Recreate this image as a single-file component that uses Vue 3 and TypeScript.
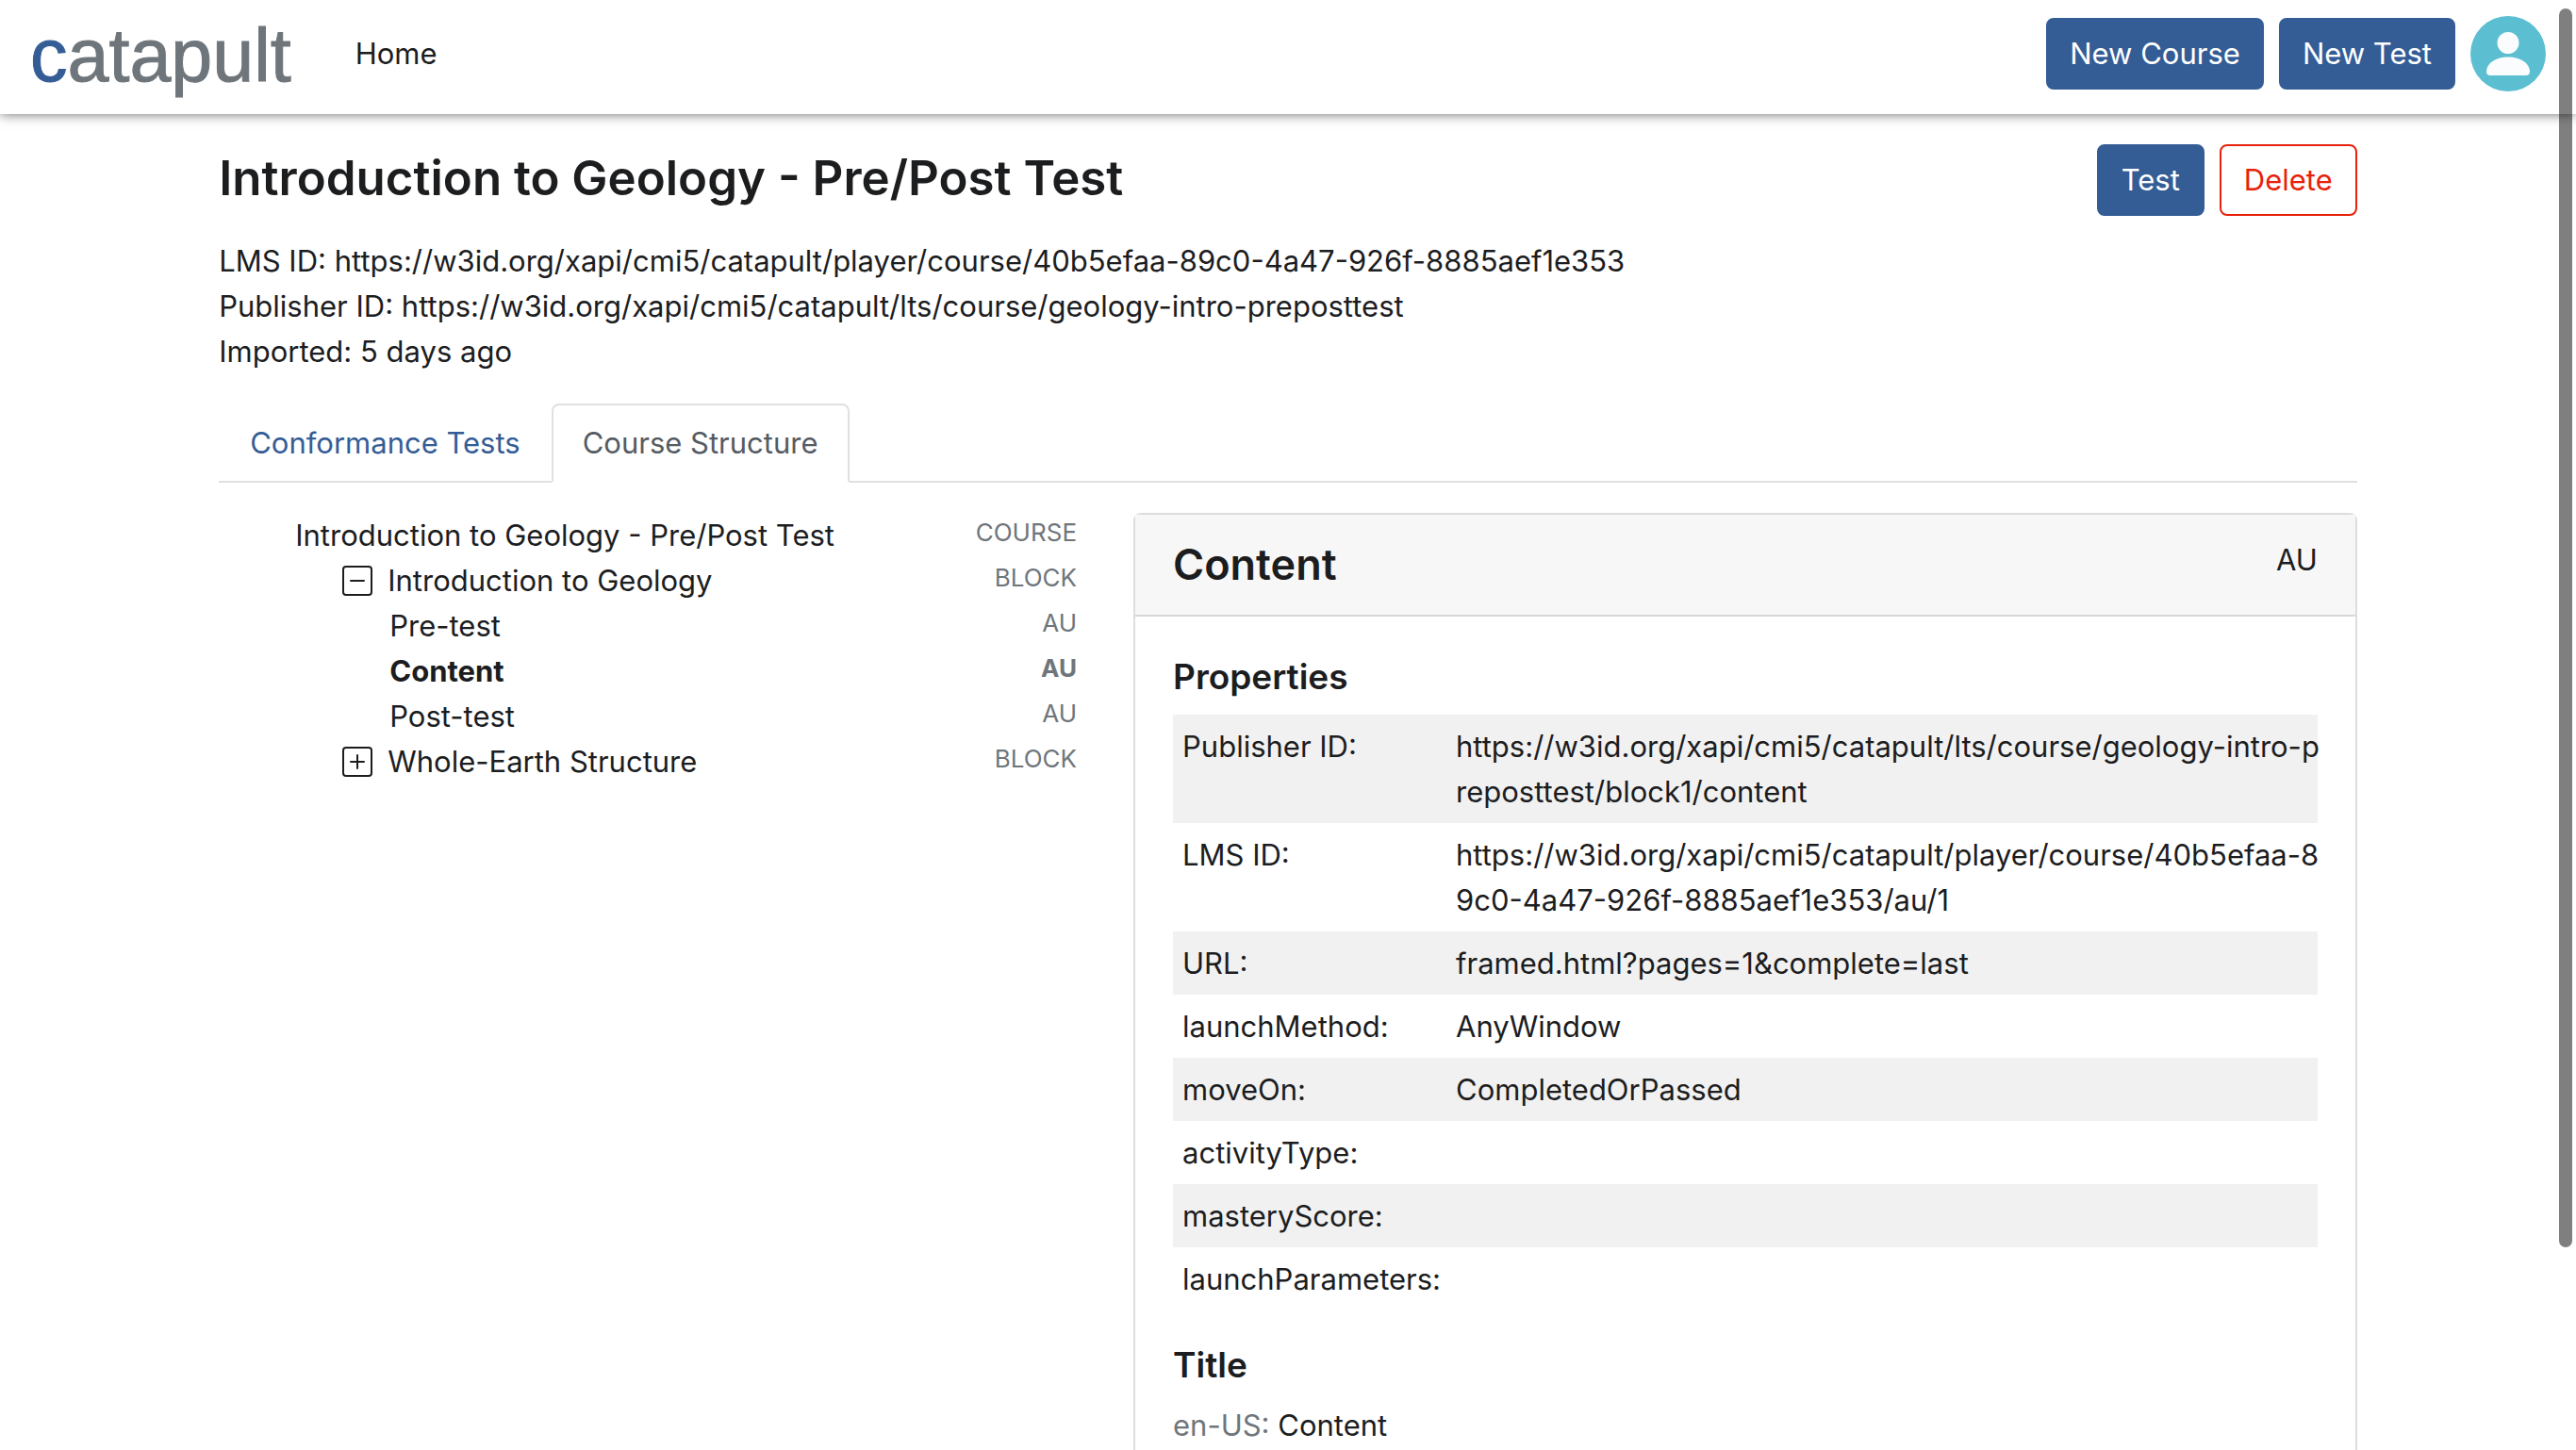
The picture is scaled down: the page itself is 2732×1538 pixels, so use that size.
<script setup lang="ts">
import { ref } from 'vue'

interface TreeNode {
  label: string
  kind: string
  level: number
  toggle?: 'open' | 'closed'
}

interface Property {
  name: string
  value: string
}

const nodes: TreeNode[] = [
  { label: 'Introduction to Geology - Pre/Post Test', kind: 'COURSE', level: 0 },
  { label: 'Introduction to Geology', kind: 'BLOCK', level: 1, toggle: 'open' },
  { label: 'Pre-test', kind: 'AU', level: 2 },
  { label: 'Content', kind: 'AU', level: 2 },
  { label: 'Post-test', kind: 'AU', level: 2 },
  { label: 'Whole-Earth Structure', kind: 'BLOCK', level: 1, toggle: 'closed' },
]

const properties: Property[] = [
  { name: 'Publisher ID', value: 'https://w3id.org/xapi/cmi5/catapult/lts/course/geology-intro-p\nreposttest/block1/content' },
  { name: 'LMS ID', value: 'https://w3id.org/xapi/cmi5/catapult/player/course/40b5efaa-8\n9c0-4a47-926f-8885aef1e353/au/1' },
  { name: 'URL', value: 'framed.html?pages=1&complete=last' },
  { name: 'launchMethod', value: 'AnyWindow' },
  { name: 'moveOn', value: 'CompletedOrPassed' },
  { name: 'activityType', value: '' },
  { name: 'masteryScore', value: '' },
  { name: 'launchParameters', value: '' },
]

const selected = ref('Content')
</script>

<template>
  <div class="app">
    <header class="navbar">
      <a href="#" class="brand"><span class="brand-initial">c</span>atapult</a>
      <nav class="nav-main"><a href="#">Home</a></nav>
      <div class="actions">
        <button type="button" class="btn btn-primary">New Course</button>
        <button type="button" class="btn btn-primary">New Test</button>
        <button type="button" class="avatar" aria-label="Account">
          <svg viewBox="0 0 80 80" aria-hidden="true">
            <circle cx="40" cy="40" r="40" fill="#5bbfd1" />
            <circle cx="40" cy="28.5" r="11.5" fill="#fbfcfe" />
            <path d="M21 63c-2.500 0-4-1.500-4-4 0-8 9-15.500 23-15.500S63 51 63 59c0 2.500-1.500 4-4 4z" fill="#fbfcfe" />
          </svg>
        </button>
      </div>
    </header>

    <main class="page">
      <div class="heading">
        <h1>Introduction to Geology - Pre/Post Test</h1>
        <div class="actions">
          <button type="button" class="btn btn-primary">Test</button>
          <button type="button" class="btn btn-danger">Delete</button>
        </div>
      </div>
      <div class="meta">
        <div>LMS ID: https://w3id.org/xapi/cmi5/catapult/player/course/40b5efaa-89c0-4a47-926f-8885aef1e353</div>
        <div>Publisher ID: https://w3id.org/xapi/cmi5/catapult/lts/course/geology-intro-preposttest</div>
        <div>Imported: 5 days ago</div>
      </div>

      <nav class="tabs">
        <a href="#" class="tab">Conformance Tests</a>
        <a href="#" class="tab active" aria-current="page">Course Structure</a>
      </nav>

      <div class="columns">
        <ul class="tree">
          <li
            v-for="node in nodes"
            :key="node.label"
            :class="['level-' + node.level, { selected: node.label === selected }]"
            @click="selected = node.label"
          >
            <button v-if="node.toggle" type="button" class="toggle" :aria-label="node.toggle === 'open' ? 'Collapse' : 'Expand'">
              <svg viewBox="0 0 16 16" fill="none" stroke="currentColor" aria-hidden="true">
                <rect x="0.5" y="0.5" width="15" height="15" rx="1.5" />
                <path d="M4.500 8h7" stroke-linecap="round" />
                <path v-if="node.toggle === 'closed'" d="M8 4.500v7" stroke-linecap="round" />
              </svg>
            </button>
            <span class="label">{{ node.label }}</span>
            <span class="kind">{{ node.kind }}</span>
          </li>
        </ul>

        <section class="card">
          <div class="card-header">
            <h2>Content</h2>
            <span>AU</span>
          </div>
          <div class="card-body">
            <h3>Properties</h3>
            <table>
              <tbody>
                <tr v-for="item in properties" :key="item.name">
                  <th scope="row">{{ item.name }}:</th>
                  <td>{{ item.value }}</td>
                </tr>
              </tbody>
            </table>
            <h3>Title</h3>
            <p><span class="lang">en-US:</span> Content</p>
          </div>
        </section>
      </div>
    </main>

    <div class="scroll-thumb" aria-hidden="true"></div>
  </div>
</template>

<style>
body {
  margin: 0;
  background: #fff;
}
</style>

<style scoped>
.app {
  position: relative;
  height: 100vh;
  overflow: hidden;
  color: #1c1d1f;
  font-family: Inter, "Liberation Sans", sans-serif;
  font-size: 31px;
  line-height: 48px;
}

a {
  color: inherit;
  text-decoration: none;
}

h1,
h2,
h3,
p,
ul {
  margin: 0;
  padding: 0;
  font-weight: 600;
}

.navbar {
  display: flex;
  align-items: center;
  height: 121px;
  padding: 0 32px 7px;
  box-sizing: border-box;
  box-shadow: 0 0 12px rgba(0, 0, 0, 0.6);
}

.brand {
  padding-top: 4px;
  color: #6f767b;
  font-family: "Liberation Sans", Arial, sans-serif;
  font-size: 79px;
  line-height: 96px;
  -webkit-text-stroke: 1px currentColor;
}

.brand-initial {
  color: #345d96;
}

.nav-main {
  flex: 1;
  padding-left: 68px;
}

.actions {
  display: flex;
  align-items: center;
  gap: 16px;
}

.btn {
  height: 76px;
  padding: 0 23px;
  border: 2px solid #345d96;
  border-radius: 8px;
  font: inherit;
}

.heading .btn {
  padding: 0 24px;
}

.btn-primary {
  background: #345d96;
  color: #fff;
}

.btn-danger {
  border-color: #e7210b;
  background: #fff;
  color: #e7210b;
}

.avatar {
  width: 80px;
  height: 80px;
  padding: 0;
  border: 0;
  background: none;
}

.avatar svg,
.toggle svg {
  display: block;
  width: 100%;
  height: 100%;
}

.page {
  width: 83%;
  margin: 0 auto;
  padding-top: 32px;
}

.heading {
  display: flex;
  align-items: flex-start;
  justify-content: space-between;
}

h1 {
  font-size: 51px;
  line-height: 72px;
}

.meta {
  padding-top: 24px;
}

.tabs {
  display: flex;
  margin-top: 31px;
  border-bottom: 2px solid #dfe0e1;
}

.tab {
  margin-bottom: -2px;
  padding: 16px 31px;
  border: 2px solid transparent;
  border-radius: 8px 8px 0 0;
  color: #345d96;
}

.tab.active {
  border-color: #dfe0e1 #dfe0e1 #fff;
  background: #fff;
  color: #555b63;
}

.columns {
  display: grid;
  grid-template-columns: repeat(12, 1fr);
  align-items: start;
  gap: 60px;
  padding-top: 32px;
}

.tree {
  grid-column: span 5;
  list-style: none;
}

.tree li {
  display: flex;
  align-items: center;
  height: 48px;
  font-weight: 400;
}

.tree .level-0 {
  padding-left: 81px;
}

.tree .level-1 {
  padding-left: 131px;
}

.tree .level-2 {
  padding-left: 181px;
}

.tree .selected {
  font-weight: 700;
}

.toggle {
  width: 32px;
  height: 32px;
  margin-right: 16px;
  padding: 0;
  border: 0;
  background: none;
  color: inherit;
}

.label {
  flex: 1;
}

.kind {
  align-self: flex-start;
  color: #6f767b;
  font-size: 26px;
  line-height: 42px;
}

.card {
  grid-column: span 7;
  border: 2px solid #dcdddd;
  border-radius: 8px;
}

.card-header {
  display: flex;
  justify-content: space-between;
  padding: 24px 40px;
  border-bottom: 2px solid #d8d8d8;
  background: #f7f7f7;
}

h2 {
  font-size: 45px;
  line-height: 58px;
}

.card-body {
  padding: 40px;
}

h3 {
  font-size: 37px;
  line-height: 48px;
}

table {
  width: 100%;
  margin: 16px 0 34px;
  border-collapse: collapse;
  table-layout: fixed;
}

tr:nth-child(odd) {
  background: #f1f1f1;
}

th,
td {
  padding: 10px 0 9px 10px;
  font-weight: 400;
  text-align: left;
  vertical-align: top;
  white-space: pre;
}

th {
  width: 280px;
}

p {
  padding-top: 16px;
  font-weight: 400;
}

.lang {
  color: #6f767b;
}

.scroll-thumb {
  position: absolute;
  top: 9px;
  right: 4px;
  bottom: 14%;
  width: 14px;
  border-radius: 7px;
  background: rgba(0, 0, 0, 0.5);
}
</style>
